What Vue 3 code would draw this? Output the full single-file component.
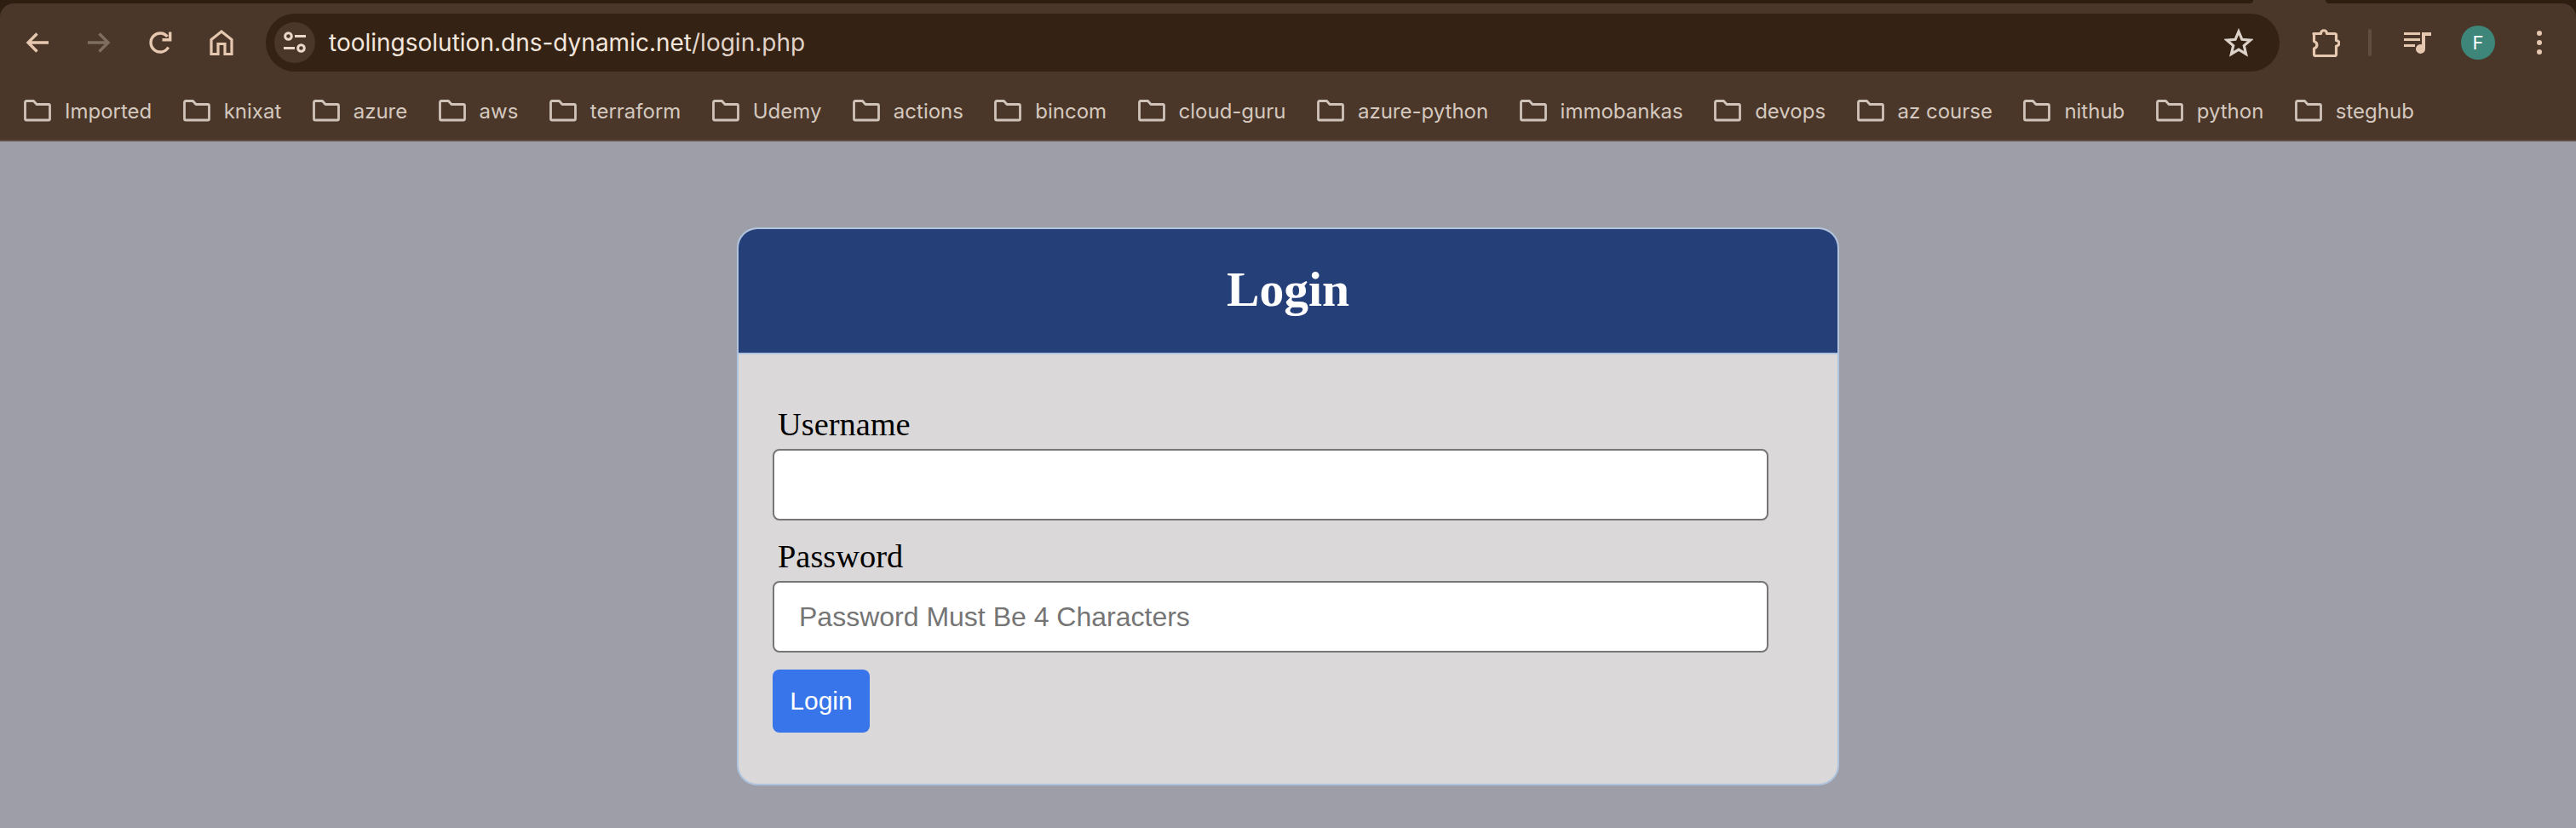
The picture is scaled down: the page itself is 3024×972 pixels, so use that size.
<script setup>
const bookmarks = ['Imported','knixat','azure','aws','terraform','Udemy','actions','bincom','cloud-guru','azure-python','immobankas','devops','az course','nithub','python','steghub']
</script>

<template>
  <div class="page">
    <header class="chrome">
      <div class="strip">
        <div class="strip-left"></div>
        <div class="strip-right"></div>
      </div>
      <div class="panel">
        <div class="toolbar">
          <div class="nav">
            <span class="slot">
              <svg width="32" height="32" viewBox="0 0 32 32" fill="none" stroke="#e6c7b0" stroke-width="3.4"><path d="M29 16H5M15.5 5.5 5 16l10.5 10.5"/></svg>
            </span>
            <span class="slot">
              <svg width="32" height="32" viewBox="0 0 32 32" fill="none" stroke="#7e6e60" stroke-width="3.4"><path d="M3 16h24M16.5 5.5 27 16 16.500 26.500"/></svg>
            </span>
            <span class="slot">
              <svg width="32" height="32" viewBox="0 0 32 32" fill="none" stroke="#e6c7b0" stroke-width="3.4"><path d="M25.600 21.500A11 11 0 1 1 24.500 9"/><path d="M27.700 3.500V12.700H18.500" /></svg>
            </span>
            <span class="slot">
              <svg width="32" height="32" viewBox="0 0 32 32" fill="none" stroke="#e6c7b0" stroke-width="3.200"><path d="M4 29.500V12.500L16 3l12 9.500v17H20V17.500h-8v12z"/></svg>
            </span>
          </div>
          <div class="omnibox">
            <span class="site">
              <svg width="28" height="28" viewBox="0 0 28 28" fill="none" stroke="#ecd9ca" stroke-width="3"><circle cx="6.500" cy="6.500" r="3.800"/><path d="M14 6.500h13M1 20.500h13"/><circle cx="21.500" cy="20.500" r="3.800"/></svg>
            </span>
            <span class="url">toolingsolution.dns-dynamic.net<span class="url-path">/login.php</span></span>
            <svg class="star" width="34" height="34" viewBox="0 0 34 34" fill="none" stroke="#ddd2c9" stroke-width="3.200" stroke-linejoin="miter"><path d="M17 4l3.900 9.300 10 .8-7.600 6.500 2.300 9.800L17 25.200 8.400 30.400l2.300-9.800L3.100 14.100l10-.8z"/></svg>
          </div>
          <svg class="ext" width="34" height="34" viewBox="0 0 34 34" fill="none" stroke="#e6c7b0" stroke-width="3.200" stroke-linejoin="round"><path d="M3 6.500h8.500c0-5 7-5 7 0H28a1.500 1.500 0 0 1 1.500 1.500v6.500c4.500 0 4.500 6.500 0 6.500V31a1.500 1.500 0 0 1-1.500 1.500H5A1.500 1.500 0 0 1 3.500 31v-7c4.500-1.500 4.500-7 0-8.500V8z"/></svg>
          <span class="sep"></span>
          <svg class="media" width="32" height="26" viewBox="0 0 32 26" fill="#e6c7b0"><path d="M0 1h19v3H0zM0 8h19v3H0zM0 15h13v3H0z"/><path d="M21 1h11v4h-7v15.500a5.500 5.500 0 1 1-4-5.300z"/></svg>
          <span class="avatar">F</span>
          <span class="dots"><i></i><i></i><i></i></span>
        </div>
        <nav class="bookmarks">
          <span v-for="name in bookmarks" :key="name" class="bookmark">
            <svg width="32" height="26" viewBox="0 0 32 26" fill="none" stroke="#cfc3ba" stroke-width="2.800" stroke-linejoin="round"><path d="M1.500 3a1.500 1.500 0 0 1 1.500-1.500h8.500l3.500 4h14a1.500 1.500 0 0 1 1.500 1.500v15.500a1.500 1.500 0 0 1-1.500 1.500H3a1.500 1.500 0 0 1-1.500-1.500z"/></svg>
            <span>{{ name }}</span>
          </span>
        </nav>
      </div>
    </header>

    <main class="content">
      <section class="card">
        <div class="card-head"><h2>Login</h2></div>
        <form class="card-body" @submit.prevent>
          <label class="label" for="username">Username</label>
          <input id="username" class="field" type="text" />
          <label class="label second" for="password">Password</label>
          <input id="password" class="field" type="password" placeholder="Password Must Be 4 Characters" />
          <button class="submit" type="submit">Login</button>
        </form>
      </section>
    </main>
  </div>
</template>

<style>
html, body { margin: 0; background: #9e9ea9; }
</style>

<style scoped>
.page { width: 3024px; height: 972px; display: flex; flex-direction: column; overflow: hidden; background: #9e9ea9; }
.chrome { background: #2e1e12; flex: none; }
.strip { height: 4px; display: flex; justify-content: space-between; background: #4a3729; }
.strip-left { width: 2645px; background: #2e1e12; border-bottom-right-radius: 8px; }
.strip-right { width: 294px; background: #2e1e12; border-bottom-left-radius: 8px; }
.panel { background: #4a3729; border-radius: 16px 16px 0 0; border-bottom: 2px solid #5e4e43; }
.toolbar { height: 96px; display: flex; align-items: center; padding: 0 0 4px 8px; box-sizing: border-box; }
.nav { display: flex; }
.slot { width: 72px; height: 68px; display: flex; align-items: center; justify-content: center; }
.omnibox { margin-left: 16px; width: 2364px; height: 68px; border-radius: 34px; background: #342214; display: flex; align-items: center; padding: 0 31px 0 10px; box-sizing: border-box; }
.site { width: 48px; height: 48px; border-radius: 50%; background: #4a3729; display: flex; align-items: center; justify-content: center; flex: none; }
.url { margin-left: 16px; font: 28px Inter, "Noto Sans", sans-serif; color: #f3e6dc; flex: 1; white-space: nowrap; }
.url-path { color: #e0d3c9; }
.star { flex: none; }
.ext { margin-left: 37px; flex: none; }
.sep { width: 4px; height: 32px; margin-left: 33px; background: #5f4d40; border-radius: 2px; flex: none; }
.media { margin-left: 38px; flex: none; }
.avatar { width: 40px; height: 40px; margin-left: 35px; border-radius: 50%; background: #3d8679; color: #fff; font: 22px Inter, sans-serif; display: flex; align-items: center; justify-content: center; flex: none; }
.dots { margin-left: 49px; display: flex; flex-direction: column; gap: 5px; flex: none; }
.dots i { display: block; width: 6px; height: 6px; border-radius: 50%; background: #e6c7b0; }
.bookmarks { height: 64px; padding: 0 0 4px 28px; box-sizing: border-box; display: flex; align-items: center; gap: 36.400px; }
.bookmark { display: flex; align-items: center; gap: 16px; font: 24px Inter, "Noto Sans", sans-serif; color: #d4c8bf; white-space: nowrap; }
.content { flex: 1; display: flex; justify-content: center; align-items: flex-start; padding-top: 101px; }
.card { width: 1294px; box-sizing: border-box; border: 2px solid #b0c4de; border-radius: 24px; overflow: hidden; background: #dad8d9; }
.card-head { height: 147px; box-sizing: border-box; background: #254079; border-bottom: 2px solid #b0c4de; padding-bottom: 4px; display: flex; align-items: center; justify-content: center; }
.card-head h2 { margin: 0; font: bold 57.600px "Liberation Serif", serif; color: #fff; }
.card-body { display: flex; flex-direction: column; align-items: flex-start; height: 504px; box-sizing: border-box; padding: 60px 0 0 40px; }
.label { font: 38.400px/44px "Liberation Serif", serif; color: #000; margin-left: 6px; }
.second { margin-top: 20px; }
.field { width: 1169px; height: 84px; box-sizing: border-box; margin: 7px 0 0; padding: 0 29px; border: 2px solid #767676; border-radius: 8px; background: #fff; font: 32px "Liberation Sans", sans-serif; }
.field::placeholder { color: #757575; opacity: 1; }
.submit { margin-top: 20px; width: 114px; height: 74px; border: 0; border-radius: 8px; background: #3875eb; color: #fff; font: 30px "Liberation Sans", sans-serif; padding: 0; }
</style>
